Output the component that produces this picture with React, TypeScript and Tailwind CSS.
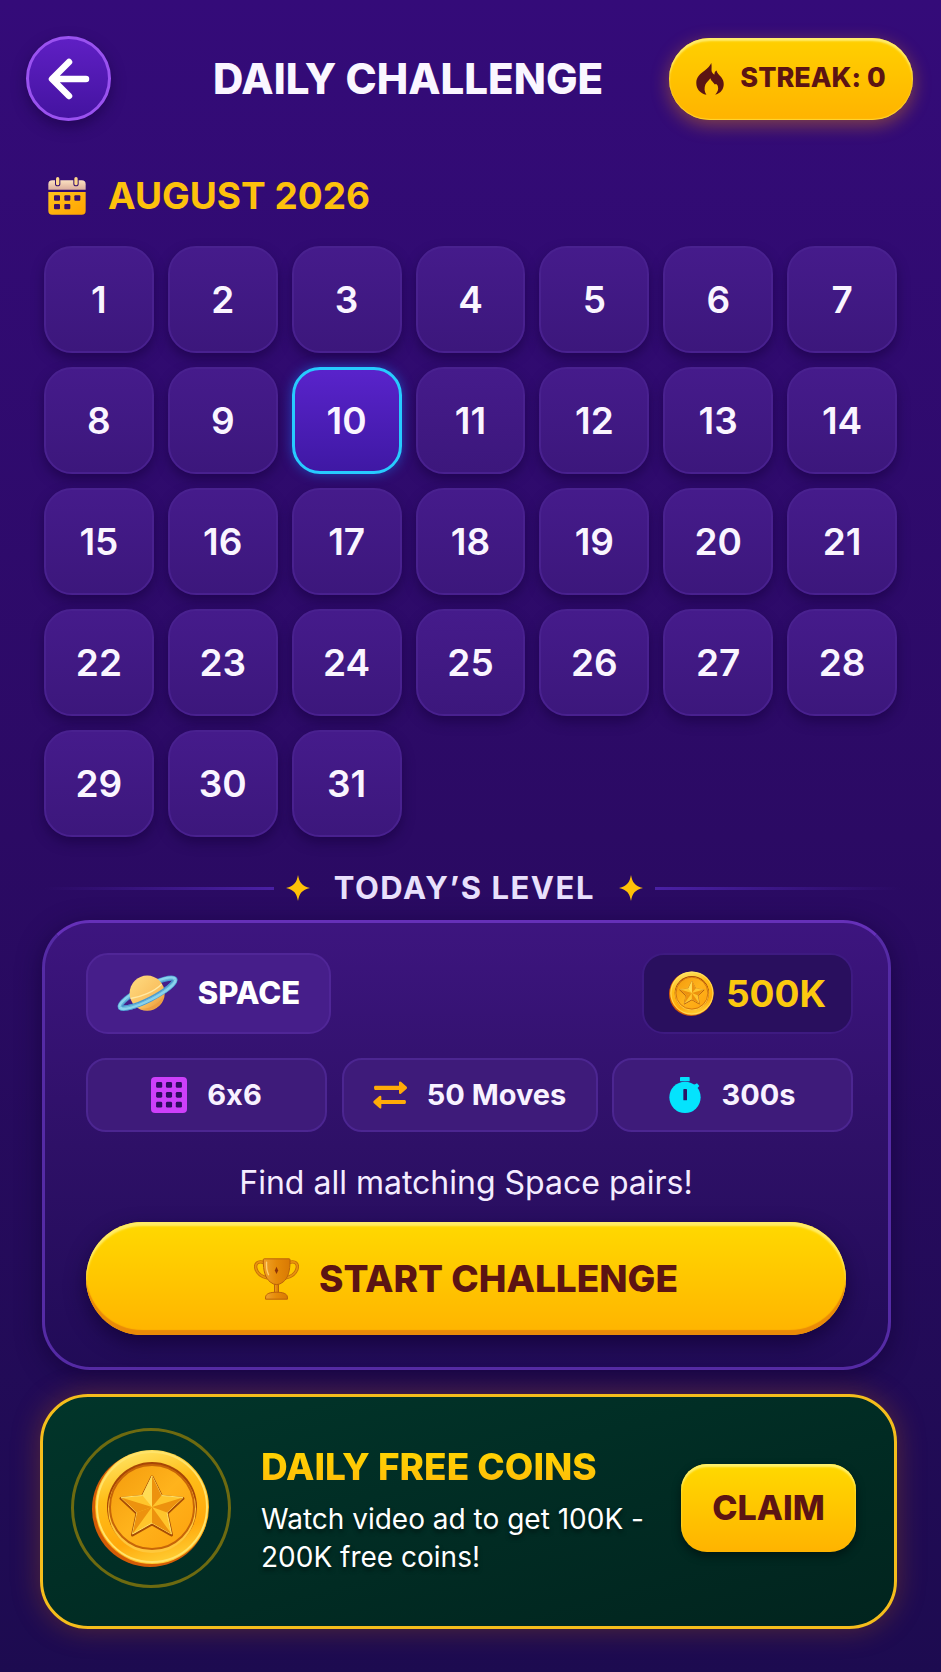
import { useState } from 'react';
import clsx from 'clsx';

const DAYS = Array.from({ length: 31 }, (_, i) => i + 1);

const STAR = 'M0 -31 L9.5 -11.5 L31 -9.5 L15 5.5 L19.5 27 L0 16 L-19.5 27 L-15 5.5 L-31 -9.5 L-9.5 -11.5 Z';

function BackArrowIcon() {
  return (
    <svg viewBox="0 0 42 42" className="size-[42px]" fill="none" stroke="#fff" strokeWidth="6.5" strokeLinecap="round" strokeLinejoin="round">
      <path d="M38 21H5M21 4L4 21l17 17" />
    </svg>
  );
}

function FlameIcon() {
  return (
    <svg viewBox="0 0 84 98" className="h-8 w-7" fill="#5c1413">
      <path d="M46 0C48 12 46 18 47 25C49 31 53 34 56 35C55 30 57 26 62 23C64 32 70 36 76 43C81 50 84 56 84 64C84 80 76 91 58 97C66 88 69 80 66 71C64 66 61 62 57 66C52 59 46 56 43 47C38 55 31 59 28 66C24 76 24 88 31 97C12 93 0 80 0 61C0 43 12 33 26 23C35 16 42 9 46 0Z" />
    </svg>
  );
}

function CalendarIcon() {
  return (
    <svg viewBox="0 0 112 114" className="size-[38px]">
      <defs>
        <linearGradient id="cal-body" x1="0" y1="0" x2="1" y2="1">
          <stop offset="0" stopColor="#ffc21a" />
          <stop offset="1" stopColor="#ffa300" />
        </linearGradient>
        <linearGradient id="cal-top" x1="0" y1="0" x2="0" y2="1">
          <stop offset="0" stopColor="#fbe0c0" />
          <stop offset="1" stopColor="#dcae9c" />
        </linearGradient>
      </defs>
      <path d="M0 38V22Q0 10 12 10H100Q112 10 112 22V38Z" fill="url(#cal-top)" />
      <path d="M0 45H112V101Q112 113 100 113H12Q0 113 0 101Z" fill="url(#cal-body)" />
      <rect x="20" y="-2" width="16" height="30" rx="8" fill="#340d6c" />
      <rect x="75" y="-2" width="16" height="30" rx="8" fill="#340d6c" />
      <rect x="23" y="0" width="10" height="25" rx="5" fill="#ffd68e" />
      <rect x="78" y="0" width="10" height="25" rx="5" fill="#ffd68e" />
      <g fill="#3a0e6b">
        <rect x="17" y="55" width="18" height="16" rx="3" />
        <rect x="48" y="55" width="18" height="16" rx="3" />
        <rect x="78" y="55" width="18" height="16" rx="3" />
        <rect x="17" y="81" width="18" height="16" rx="3" />
        <rect x="48" y="81" width="18" height="16" rx="3" />
      </g>
    </svg>
  );
}

function SparkleIcon() {
  return (
    <svg viewBox="0 0 72 78" className="h-[26px] w-6 shrink-0" fill="#ffc107">
      <path d="M36 0C40 22 48 34 72 39C48 44 40 56 36 78C32 56 24 44 0 39C24 34 32 22 36 0Z" />
    </svg>
  );
}

function PlanetRing() {
  return (
    <g transform="rotate(-27 92 54)" fill="none">
      <ellipse cx="92" cy="54" rx="92" ry="20" stroke="#4c99cf" strokeWidth="16" />
      <ellipse cx="92" cy="54" rx="93" ry="21" stroke="#8ad3ec" strokeWidth="10" />
      <ellipse cx="92" cy="54" rx="88" ry="17" stroke="#58a9d4" strokeWidth="2" />
    </g>
  );
}

function PlanetIcon() {
  return (
    <svg viewBox="0 0 184 110" className="h-[37px] w-[61px] overflow-visible">
      <defs>
        <linearGradient id="planet" x1="0" y1="0" x2="1" y2="1">
          <stop offset="0" stopColor="#ffdc82" />
          <stop offset=".6" stopColor="#fac160" />
          <stop offset="1" stopColor="#e88d2d" />
        </linearGradient>
        <clipPath id="planet-front">
          <path d="M-20 130V110L92 54L204 -2V130Z" />
        </clipPath>
      </defs>
      <PlanetRing />
      <circle cx="91" cy="54" r="53" fill="url(#planet)" />
      <path d="M41 70C72 66 111 50 135 27" fill="none" stroke="#ffe9a4" strokeWidth="4" />
      <path d="M66 101C98 104 125 86 140 63C139 91 110 113 66 101Z" fill="#ed9f43" />
      <g clipPath="url(#planet-front)">
        <PlanetRing />
      </g>
    </svg>
  );
}

function CoinIcon({ className }: { className: string }) {
  return (
    <svg viewBox="0 0 118 118" className={className}>
      <defs>
        <linearGradient id="coin-rim" x1=".3" y1="0" x2=".6" y2="1">
          <stop offset="0" stopColor="#ffe463" />
          <stop offset=".35" stopColor="#ffbd18" />
          <stop offset=".75" stopColor="#ffa90c" />
          <stop offset="1" stopColor="#ffcf35" />
        </linearGradient>
        <linearGradient id="coin-face" x1="0" y1="0" x2="1" y2="1">
          <stop offset="0" stopColor="#f39a0c" />
          <stop offset=".5" stopColor="#ffb31c" />
          <stop offset="1" stopColor="#fda10d" />
        </linearGradient>
      </defs>
      <circle cx="58" cy="60" r="58" fill="#d45c06" />
      <circle cx="60" cy="58" r="57" fill="url(#coin-rim)" />
      <circle cx="60" cy="58" r="55" fill="none" stroke="#ffe36a" strokeWidth="2" />
      <circle cx="60" cy="58" r="45" fill="#a84605" />
      <circle cx="60" cy="60" r="44" fill="#ffc83c" />
      <circle cx="60" cy="58" r="42" fill="url(#coin-face)" stroke="#c76508" strokeWidth="2" />
      <g transform="translate(60 58)" strokeLinejoin="round">
        <path d={STAR} transform="translate(0 1)" fill="#a84d05" stroke="#a84d05" strokeWidth="3" />
        <path d={STAR} fill="#ffc52c" stroke="#ffe26a" strokeWidth="1" />
        <g fill="#ed920e">
          <path d="M0 0L0 -31L9.5 -11.5Z" />
          <path d="M0 0L31 -9.5L15 5.5Z" />
          <path d="M0 0L19.5 27L0 16Z" />
          <path d="M0 0L-19.5 27L-15 5.5Z" />
          <path d="M0 0L-31 -9.5L-15 5.5Z" />
        </g>
        <path d="M0 0L-9.5 -11.5L0 -31Z" fill="#ffdc55" />
      </g>
    </svg>
  );
}

function GridIcon() {
  const cells = [15, 44, 73];
  return (
    <svg viewBox="0 0 106 106" className="size-9">
      <rect width="106" height="106" rx="12" fill="#cd3ffa" />
      {cells.map((y) =>
        cells.map((x) => <rect key={`${x}-${y}`} x={x} y={y} width="18" height="17" rx="4" fill="#2e0b60" />)
      )}
    </svg>
  );
}

function SwapIcon() {
  return (
    <svg viewBox="0 0 102 84" className="h-7 w-[34px]" fill="#ffab08">
      <path d="M7 14H78V4Q79 0 84 2L101 17Q103 20 101 23L84 38Q79 41 78 36V27H7Q3 27 3 20T7 14Z" />
      <path d="M95 57H25V47Q24 42 19 45L2 60Q0 63 2 66L19 81Q24 85 25 80V69H95Q99 69 99 63T95 57Z" />
    </svg>
  );
}

function StopwatchIcon() {
  return (
    <svg viewBox="0 0 96 108" className="h-9 w-8" fill="#04e3fd">
      <rect x="33" y="0" width="29" height="13" rx="2" />
      <path d="M73 25L84 19L91 27L82 37Z" />
      <circle cx="48" cy="61" r="47" />
      <rect x="43" y="36" width="11" height="34" rx="2" fill="#2a1465" />
    </svg>
  );
}

function TrophyIcon() {
  return (
    <svg viewBox="0 0 136 126" className="h-[42px] w-[45px]">
      <defs>
        <linearGradient id="trophy" x1="0" y1="0" x2="1" y2="0">
          <stop offset="0" stopColor="#f0a12a" />
          <stop offset=".5" stopColor="#e58a08" />
          <stop offset="1" stopColor="#d97904" />
        </linearGradient>
      </defs>
      <g fill="none">
        <path d="M32 14C10 6 2 18 6 32C10 48 24 56 40 60M104 14C126 6 134 18 130 32C126 48 112 56 96 60" stroke="#c46c0a" strokeWidth="10" />
        <path d="M32 14C10 6 2 18 6 32C10 48 24 56 40 60M104 14C126 6 134 18 130 32C126 48 112 56 96 60" stroke="#e8930d" strokeWidth="5" />
      </g>
      <g fill="url(#trophy)" stroke="#b9610a" strokeWidth="3">
        <path d="M62 78H74V108H62Z" />
        <path d="M35 124V117C37 107 48 103 68 103S99 107 101 117V124Z" />
        <path d="M28 5Q28 2 31 2H106Q109 2 109 5C109 40 103 60 88 72Q68 88 49 72C34 60 28 40 28 5Z" />
      </g>
      <path d="M38 12C37 30 40 42 44 50" fill="none" stroke="#ffd071" strokeWidth="4" strokeLinecap="round" />
      <path d="M68 26L73 37L68 48L63 37Z" fill="#8d3409" />
    </svg>
  );
}

const STATS = [
  { label: '6x6', icon: <GridIcon />, width: 'w-[241px]' },
  { label: '50 Moves', icon: <SwapIcon />, width: 'w-[256px]' },
  { label: '300s', icon: <StopwatchIcon />, width: 'w-[241px]' },
];

export default function App() {
  const [selected, setSelected] = useState(10);

  return (
    // calt is off so Inter does not turn the "x" of 6x6 into a multiplication sign
    <main className="min-h-screen bg-linear-to-b from-[#340b79] via-[#2b0a64] to-[#1d0b50] pb-11 font-['Inter','Liberation_Sans',sans-serif] text-white [font-feature-settings:'calt'_0]">
      <header className="flex items-center pt-9 pr-7 pl-[26px]">
        <button
          aria-label="Back"
          className="flex size-[85px] shrink-0 items-center justify-center rounded-full border-3 border-[#9a52f0] bg-linear-to-b from-[#5f1fc4] to-[#4413a0] shadow-[0_6px_14px_rgba(20,0,60,0.5)]"
        >
          <BackArrowIcon />
        </button>
        <h1 className="flex-1 pl-9 text-center text-[42px] leading-[50px] font-extrabold whitespace-nowrap text-[#faf6ff]">
          DAILY CHALLENGE
        </h1>
        <button className="flex h-[82px] w-[244px] shrink-0 items-center justify-center gap-4 rounded-full bg-linear-to-b from-[#ffd000] to-[#ffb300] text-[27px] font-extrabold text-[#5c1413] shadow-[inset_0_3px_2px_#ffec6b,inset_0_-1px_1px_#ffd633,0_5px_18px_rgba(255,150,0,0.4)]">
          <FlameIcon />
          <span>STREAK: 0</span>
        </button>
      </header>

      <section className="px-11 pt-[50px]">
        <h2 className="flex items-center gap-[22px] pl-1 text-[37px] leading-[50px] font-bold text-[#fdc10c]">
          <CalendarIcon />
          AUGUST 2026
        </h2>
        <div className="mt-[25px] grid grid-cols-7 gap-[14px]">
          {DAYS.map((day) => (
            <button
              key={day}
              onClick={() => setSelected(day)}
              aria-pressed={day === selected}
              className={clsx(
                'h-[107px] rounded-[28px] text-[37px] font-semibold text-[#faf5ff]',
                day === selected
                  ? 'border-3 border-[#27cbff] bg-linear-to-b from-[#5923cb] to-[#3f18a4] shadow-[0_0_12px_rgba(20,130,255,0.5)]'
                  : 'border-2 border-[#49218f] bg-linear-to-b from-[#451b8b] to-[#3c177c] shadow-[0_6px_12px_rgba(22,2,62,0.55)]'
              )}
            >
              {day}
            </button>
          ))}
        </div>
      </section>

      <div className="flex items-center pt-7 pr-10 pl-11">
        <div className="h-[3px] flex-1 bg-linear-to-r from-transparent to-[#4a20a5]" />
        <h2 className="flex items-center gap-6 px-3 text-[31px] leading-[46px] font-bold tracking-wider text-[#e9e0fc]">
          <SparkleIcon />
          TODAY’S LEVEL
          <SparkleIcon />
        </h2>
        <div className="h-[3px] w-[246px] bg-linear-to-l from-transparent to-[#4a20a5]" />
      </div>

      <section className="mt-[9px] mr-[50px] ml-[42px] rounded-[48px] border-3 border-[#552ba5] border-t-[#6530b8] bg-linear-to-b from-[#3d157f] via-[#2e1067] to-[#210b57] pt-[30px] pr-[35px] pb-8 pl-[41px] shadow-[0_6px_24px_rgba(15,0,50,0.6)]">
        <div className="flex justify-between">
          <div className="flex h-[81px] w-[245px] items-center justify-center gap-5 rounded-[22px] border-2 border-[#502697] bg-[#461e8a] text-[31px] font-extrabold">
            <PlanetIcon />
            SPACE
          </div>
          <div className="flex h-[81px] w-[211px] items-center justify-center gap-3 rounded-[22px] border-2 border-[#3e1a81] bg-[#290f5e] text-[37px] font-bold text-[#fbc90f]">
            <CoinIcon className="size-[45px]" />
            500K
          </div>
        </div>

        <div className="mt-6 flex justify-between">
          {STATS.map((stat) => (
            <div
              key={stat.label}
              className={clsx(
                'flex h-[74px] items-center justify-center gap-5 rounded-[20px] border-2 border-[#4c2691] bg-[#3e1b7a] text-[29px] font-bold text-[#f8f2ff]',
                stat.width
              )}
            >
              {stat.icon}
              {stat.label}
            </div>
          ))}
        </div>

        <div className="pr-[7px]">
          <p className="mt-[31px] text-center text-[32px] leading-10 text-[#f4ecff]">Find all matching Space pairs!</p>
          <button className="mt-[19px] flex h-[113px] w-full items-center justify-center gap-5 rounded-full bg-linear-to-b from-[#ffd900] to-[#ffb300] text-[37px] font-extrabold text-[#5c1413] shadow-[inset_0_4px_2px_#ffec66,inset_0_-5px_1px_#ea8b08,0_8px_20px_rgba(15,0,50,0.7)]">
            <TrophyIcon />
            START CHALLENGE
          </button>
        </div>
      </section>

      <section className="mt-6 mr-11 ml-10 flex h-[235px] items-center rounded-[48px] border-3 border-[#f5bd1c] bg-linear-to-br from-[#01352a] to-[#01241e] pr-[38px] pb-2 pl-7 shadow-[0_0_28px_rgba(190,100,0,0.35)]">
        <div className="flex size-40 shrink-0 items-center justify-center rounded-full border-3 border-[#6d6a10]">
          <CoinIcon className="size-[118px]" />
        </div>
        <div className="flex-1 pt-1 pl-[30px]">
          <h2 className="bg-linear-to-b from-[#ffd800] to-[#ffb80a] bg-clip-text text-[37px] leading-[46px] font-extrabold whitespace-nowrap text-transparent">
            DAILY FREE COINS
          </h2>
          <p className="mt-[10px] text-[28px] leading-[38px] whitespace-nowrap [text-shadow:0_3px_4px_rgba(0,0,0,0.5)]">
            Watch video ad to get 100K -
            <br />
            200K free coins!
          </p>
        </div>
        <button className="h-[88px] w-[175px] shrink-0 rounded-[26px] bg-linear-to-b from-[#ffd900] to-[#ffb300] text-[34px] font-extrabold text-[#5c1413] shadow-[inset_0_3px_2px_#fff06b,0_4px_10px_rgba(0,0,0,0.45)]">
          CLAIM
        </button>
      </section>
    </main>
  );
}
